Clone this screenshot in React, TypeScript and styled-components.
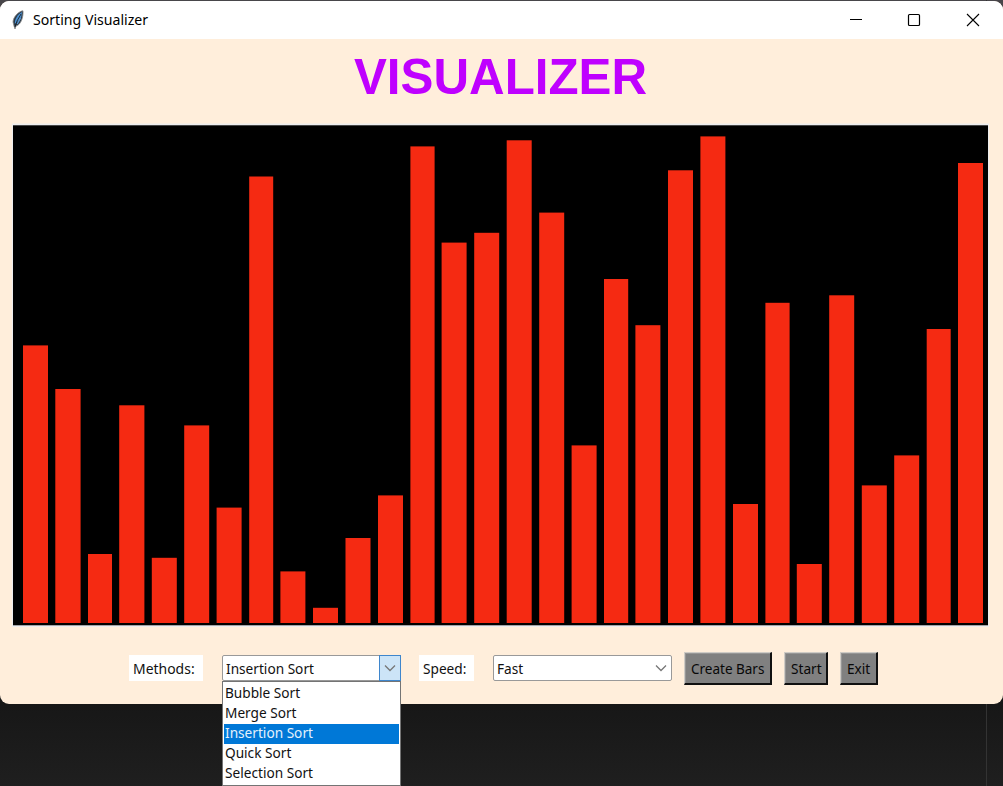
import React from "react";
import styled, { createGlobalStyle } from "styled-components";

const GlobalStyle = createGlobalStyle`
  * { box-sizing: border-box; }
  body { margin: 0; font-family: "Noto Sans", "Open Sans", sans-serif; }
`;

const Desktop = styled.main`
  width: 1003px;
  height: 786px;
  padding-top: 1px;
  overflow: hidden;
  background:
    linear-gradient(#333, #333) 986px 0 / 1px 100% no-repeat,
    linear-gradient(#48464a 0, #48464a 20px, #171717 704px, #1f1f1f 786px);
`;

const Window = styled.section`
  height: 703px;
  display: flex;
  flex-direction: column;
  align-items: center;
  border-radius: 9px;
  background: #ffeedb;
`;

const TitleBar = styled.header`
  width: 100%;
  height: 38px;
  flex: none;
  display: flex;
  align-items: center;
  padding-left: 11px;
  border-radius: 9px 9px 0 0;
  background: #fff;
`;

const Caption = styled.span`
  flex: 1;
  margin-left: 8px;
  color: #000;
  font-size: 14.3px;
  line-height: 20px;
`;

const WindowControls = styled.svg`
  display: block;
  width: 175px;
  height: 38px;
`;

const Heading = styled.h1`
  margin: 0 2px 0 0;
  height: 84px;
  line-height: 76px;
  font-family: "Liberation Sans", Arial, sans-serif;
  font-size: 49.3px;
  font-weight: 700;
  color: #bf00ff;
  white-space: nowrap;
`;

const Canvas = styled.svg`
  display: block;
  flex: none;
  width: 977px;
  height: 505px;
  margin-right: 2px;
`;

const Controls = styled.div`
  width: 100%;
  display: flex;
  align-items: center;
  margin-top: 23px;
  padding-left: 129px;
  height: 34px;
`;

const Text = styled.span<{ $scale?: number }>`
  display: inline-block;
  transform: scaleX(${(p) => p.$scale ?? 0.91});
  transform-origin: left;
  white-space: nowrap;
`;

const Label = styled.label<{ $width: number; $gap: number }>`
  width: ${(p) => p.$width}px;
  height: 26px;
  margin-right: ${(p) => p.$gap}px;
  padding-left: 4px;
  background: #fff;
  color: #111;
  font-size: 15px;
  line-height: 26px;
`;

const Combo = styled.div<{ $gap: number }>`
  position: relative;
  width: 179px;
  height: 26px;
  margin-right: ${(p) => p.$gap}px;
  display: flex;
  justify-content: space-between;
  border: 1px solid #999;
  border-radius: 2px;
  background: #fff;
  color: #111;
  font-size: 15px;
  line-height: 24px;
  padding-left: 2.5px;
`;

const DropButton = styled.span<{ $active?: boolean }>`
  width: 22px;
  height: 26px;
  margin: -1px;
  border: 1px solid ${(p) => (p.$active ? "#3f86cc" : "transparent")};
  background: ${(p) => (p.$active ? "#cce4f7" : "transparent")};
  display: grid;
  place-items: center;
`;

const Menu = styled.ul`
  position: absolute;
  top: 25px;
  left: -1px;
  width: 179px;
  height: 105px;
  margin: 0;
  padding: 1.5px 1px;
  border: 1px solid #747474;
  background: #fff;
  list-style: none;
`;

const Option = styled.li<{ $selected: boolean }>`
  height: 20px;
  padding-left: 0.5px;
  line-height: 17px;
  background: ${(p) => (p.$selected ? "#0078d7" : "#fff")};
  color: ${(p) => (p.$selected ? "#e5f1fc" : "#111")};
`;

const Button = styled.button<{ $width: number }>`
  width: ${(p) => p.$width}px;
  height: 33px;
  margin: 0 12px 0 0;
  padding: 1px 0 0 6px;
  border: solid;
  border-width: 1px 2px 2px 1px;
  border-color: #cfcbc5 #101010 #101010 #cfcbc5;
  box-shadow: inset 1px 1px #969696;
  background: #808080;
  color: #080808;
  font-family: inherit;
  font-size: 15px;
  line-height: 29px;
  text-align: left;
`;

const BASELINE = 623;
const bars: [number, number, number][] = [
  [23, 25, 345.4], [55.3, 25.3, 389], [88, 24, 554], [119.2, 25.2, 405.3], [151.8, 25, 557.8],
  [184.2, 25, 425.4], [216.6, 25, 507.6], [249.2, 24, 176.5], [280.4, 25, 571.4], [313, 25, 607.8],
  [345.5, 25, 538], [378, 25, 495.4], [410.4, 24.2, 146.4], [441.6, 25, 242.6], [474.2, 25, 232.8],
  [506.7, 25, 140.3], [539.2, 25, 212.6], [571.6, 25, 445.4], [604, 24.2, 279], [635.4, 25, 325.2],
  [668, 25, 170.3], [700.4, 25, 136.4], [733, 25, 504], [765.4, 24.2, 302.8], [796.8, 25, 564],
  [829.2, 25, 295.3], [861.8, 25, 485.4], [894.2, 25, 455.4], [926.7, 24, 329], [958, 25, 163],
];

const methods = ["Bubble Sort", "Merge Sort", "Insertion Sort", "Quick Sort", "Selection Sort"];

function Feather() {
  return (
    <svg width="14" height="20" viewBox="0 0 14 20" aria-hidden="true">
      <path d="M12 .8C8 1 2 7 2 12l1 4 1 3 1-3c5-1 7.5-9 7-15.2Z" fill="#2b3a48" stroke="#8a8a8a" strokeWidth=".8" />
      <path d="M11 2C7 4 3.6 9 3.8 14l4.4-4 2-3Z" fill="#4d92d2" />
      <path d="M10 4 6 11l-2 6" fill="none" stroke="#17212b" strokeWidth=".9" />
      <path d="m9.6 8-3.4 6" stroke="#5f9bd6" strokeWidth="1.2" />
    </svg>
  );
}

function Chevron() {
  return (
    <svg width="12" height="8" viewBox="0 0 12 8" aria-hidden="true">
      <path d="m1 1.5 5 5 5-5" fill="none" stroke="#777" strokeWidth="1.3" />
    </svg>
  );
}

export default function App() {
  return (
    <>
      <GlobalStyle />
      <Desktop>
        <Window>
          <TitleBar>
            <Feather />
            <Caption><Text $scale={0.987}>Sorting Visualizer</Text></Caption>
            <WindowControls viewBox="828 1 175 38" fill="none" stroke="#000">
              <path d="M850 19.5h12" />
              <rect x="908.5" y="14.5" width="11" height="11" rx="1" strokeWidth="1.2" />
              <path d="m967 14 12 12m0-12-12 12" strokeWidth="1.1" />
            </WindowControls>
          </TitleBar>
          <Heading>VISUALIZER</Heading>
          <Canvas viewBox="12 123 977 505">
            <rect x="12" y="123.5" width="977.5" height="503.5" fill="#ededee" />
            <rect x="13" y="125.3" width="975" height="500" fill="#000" />
            {bars.map(([x, width, y]) => (
              <rect key={x} x={x} y={y} width={width} height={BASELINE - y} fill="#f52a12" />
            ))}
          </Canvas>
          <Controls>
            <Label $width={74} $gap={19}><Text $scale={0.93}>Methods:</Text></Label>
            <Combo $gap={18}>
              <Text>Insertion Sort</Text>
              <DropButton $active><Chevron /></DropButton>
              <Menu>
                {methods.map((name) => (
                  <Option key={name} $selected={name === "Insertion Sort"}><Text>{name}</Text></Option>
                ))}
              </Menu>
            </Combo>
            <Label $width={55} $gap={19}><Text>Speed:</Text></Label>
            <Combo $gap={12}>
              <Text>Fast</Text>
              <DropButton><Chevron /></DropButton>
            </Combo>
            <Button $width={88}><Text $scale={0.9}>Create Bars</Text></Button>
            <Button $width={44}><Text>Start</Text></Button>
            <Button $width={38}><Text>Exit</Text></Button>
          </Controls>
        </Window>
      </Desktop>
    </>
  );
}
